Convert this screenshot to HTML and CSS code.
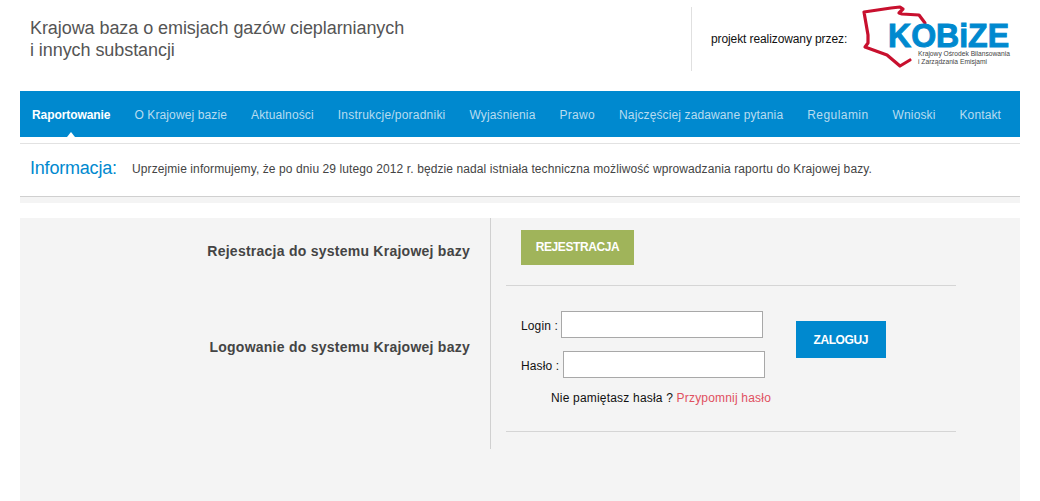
FILE: index.html
```html
<!DOCTYPE html>
<html lang="pl">
<head>
    <meta charset="UTF-8">
    <meta name="viewport" content="width=device-width, initial-scale=1.0">
    <title>Krajowa baza</title>
    <link rel="stylesheet" href="styles.css">
</head>
<body>
    <div class="container">
        <header class="header">
            <h1 class="site-title">Krajowa baza o emisjach gazów cieplarnianych<br>i innych substancji</h1>
            <div class="partner">
                <span class="partner-label">projekt realizowany przez:</span>
                <svg class="logo" width="150" height="66" viewBox="0 0 150 66">
                    <path d="M64 19 L58 11 L41 10 L38 9 L42 5 L39 3 L30 4 L3 8 L7 31 L7 39 L4 43 L15 47 L26 51 L39 62 L49 56" fill="none" stroke="#c8102e" stroke-width="3.2" stroke-linejoin="round" stroke-linecap="round"/>
                    <text class="logo-name" x="27" y="43" textLength="121" lengthAdjust="spacingAndGlyphs">KOBiZE</text>
                    <text class="logo-sub" x="57" y="52" textLength="92" lengthAdjust="spacingAndGlyphs">Krajowy Ośrodek Bilansowania</text>
                    <text class="logo-sub" x="57" y="60" textLength="69" lengthAdjust="spacingAndGlyphs">i Zarządzania Emisjami</text>
                </svg>
            </div>
        </header>

        <nav class="nav">
            <a class="active" href="#">Raportowanie</a>
            <a href="#">O Krajowej bazie</a>
            <a href="#">Aktualności</a>
            <a class="nav-instrukcje" href="#">Instrukcje/poradniki</a>
            <a href="#">Wyjaśnienia</a>
            <a class="nav-prawo" href="#">Prawo</a>
            <a href="#">Najczęściej zadawane pytania</a>
            <a class="nav-regulamin" href="#">Regulamin</a>
            <a href="#">Wnioski</a>
            <a href="#">Kontakt</a>
        </nav>

        <div class="info">
            <span class="info-title">Informacja:</span>
            <span class="info-text">Uprzejmie informujemy, że po dniu 29 lutego 2012 r. będzie nadal istniała techniczna możliwość wprowadzania raportu do Krajowej bazy.</span>
        </div>
        <div class="info-strip"></div>

        <main class="panel">
            <div class="panel-left">
                <h2 class="register-title">Rejestracja do systemu Krajowej bazy</h2>
                <h2 class="login-title">Logowanie do systemu Krajowej bazy</h2>
            </div>
            <div class="panel-right">
                <div class="register-row">
                    <a class="btn btn-green" href="#">REJESTRACJA</a>
                </div>
                <form class="login-row">
                    <div class="fields">
                        <label class="field">Login : <input type="text"></label>
                        <label class="field">Hasło : <input type="password"></label>
                    </div>
                    <button class="btn btn-blue" type="submit">ZALOGUJ</button>
                    <p class="remind">Nie pamiętasz hasła ? <a href="#">Przypomnij hasło</a></p>
                </form>
            </div>
        </main>
    </div>
</body>
</html>
```

FILE: styles.css
```css
* {
    margin: 0;
    padding: 0;
    box-sizing: border-box;
    font-family: 'Liberation Sans', Arial, sans-serif;
}

body {
    background: #fff;
    height: 501px;
    overflow: hidden;
}

.container {
    width: 1000px;
    margin: 0 0 0 20px;
}

/* Header */
.header {
    height: 91px;
    display: flex;
    justify-content: space-between;
    padding: 7px 9px 0 10px;
}

.site-title {
    font-size: 18px;
    font-weight: normal;
    line-height: 22px;
    letter-spacing: -0.07px;
    color: #555;
    padding-top: 10px;
}

.partner {
    width: 320px;
    height: 64px;
    display: flex;
    align-items: center;
    border-left: 1px solid #e0e0e0;
    padding-left: 19px;
}

.partner-label {
    font-size: 12px;
    letter-spacing: -0.1px;
    white-space: nowrap;
    color: #111;
    margin-right: 14px;
}

.logo {
    flex: none;
    overflow: visible;
    margin-top: -4px;
}

.logo-name {
    font-size: 33px;
    font-weight: bold;
    fill: #0089cf;
    stroke: #0089cf;
    stroke-width: 1;
}

.logo-sub {
    font-size: 7px;
    fill: #444;
}

/* Navigation */
.nav {
    height: 46px;
    background: #0089cf;
    display: flex;
    gap: 24px;
    padding-left: 12px;
}

.nav a {
    position: relative;
    font-size: 12px;
    line-height: 49px;
    letter-spacing: 0.12px;
    white-space: nowrap;
    color: #b8dcf0;
    text-decoration: none;
}

.nav a.nav-instrukcje {
    letter-spacing: 0.22px;
}

.nav a.nav-prawo {
    letter-spacing: 0.32px;
}

.nav a.nav-regulamin {
    letter-spacing: 0.45px;
}

.nav a.active {
    font-weight: bold;
    letter-spacing: -0.08px;
    color: #fff;
}

.nav a.active::after {
    content: '';
    position: absolute;
    left: 50%;
    bottom: 0;
    margin-left: -4px;
    border: 4px solid transparent;
    border-top: 0;
    border-bottom: 5px solid #fff;
}

/* Information */
.info {
    height: 54px;
    margin-top: 6px;
    border-top: 1px solid #e2e2e2;
    border-bottom: 1px solid #d0d0d0;
    display: flex;
    align-items: center;
    padding: 0 10px 3px;
}

.info-title {
    font-size: 18px;
    letter-spacing: -0.2px;
    color: #0089cf;
    width: 102px;
}

.info-text {
    font-size: 12px;
    letter-spacing: 0.1px;
    color: #444;
}

.info-strip {
    height: 6px;
    background: #f4f4f4;
    margin-bottom: 15px;
}

/* Panel */
.panel {
    height: 283px;
    background: #f4f4f4;
    display: flex;
    align-items: flex-start;
}

.panel-left {
    width: 471px;
    height: 231px;
    border-right: 1px solid #d0d0d0;
    text-align: right;
    padding-right: 20px;
}

.panel-left h2 {
    font-size: 14px;
    letter-spacing: 0.25px;
    color: #444;
}

.register-title {
    padding-top: 25px;
}

.login-title {
    padding-top: 80px;
}

.panel-right {
    width: 450px;
    margin-left: 15px;
}

.register-row {
    height: 68px;
    padding: 12px 0 0 15px;
    border-bottom: 1px solid #d5d5d5;
}

.btn {
    display: inline-block;
    border: none;
    font-size: 12px;
    font-weight: bold;
    letter-spacing: -0.4px;
    color: #fff;
    text-decoration: none;
    text-align: center;
}

.btn-green {
    width: 113px;
    height: 35px;
    line-height: 35px;
    background: #a0b45a;
}

.btn-blue {
    width: 90px;
    height: 37px;
    background: #0089cf;
    margin: 10px 0 0 31px;
}

.login-row {
    height: 146px;
    display: flex;
    flex-wrap: wrap;
    align-content: flex-start;
    align-items: flex-start;
    padding: 25px 0 0 15px;
    border-bottom: 1px solid #d5d5d5;
}

.field {
    display: block;
    font-size: 12px;
    letter-spacing: 0.13px;
    color: #111;
    height: 27px;
    margin-bottom: 13px;
}

.field input {
    width: 202px;
    height: 27px;
    border: 1px solid #a8a8a8;
    background: #fff;
    vertical-align: 1px;
}

.remind {
    width: 100%;
    font-size: 12px;
    letter-spacing: 0.19px;
    color: #111;
    padding-left: 30px;
}

.remind a {
    color: #e0505f;
    text-decoration: none;
}
```
